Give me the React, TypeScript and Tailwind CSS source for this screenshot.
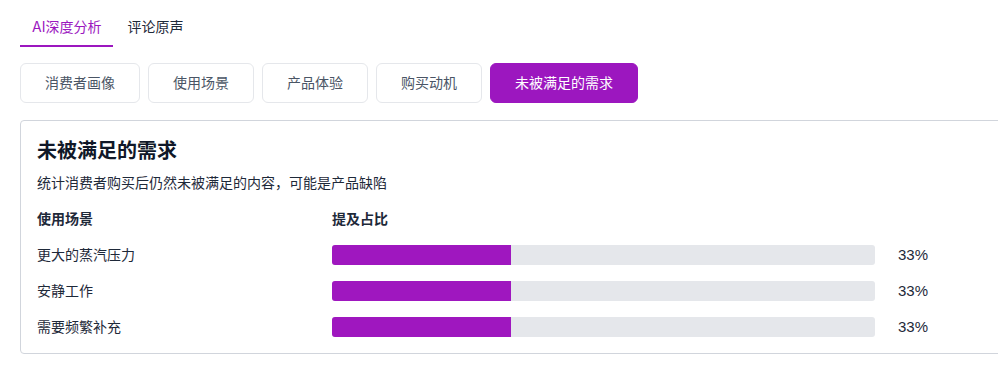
import { useState } from 'react';

const sections = ['消费者画像', '使用场景', '产品体验', '购买动机', '未被满足的需求'];

const needs = [
  { name: '更大的蒸汽压力', pct: 33 },
  { name: '安静工作', pct: 33 },
  { name: '需要频繁补充', pct: 33 },
];

export default function App() {
  const [tab, setTab] = useState(0);
  const [section, setSection] = useState(4);

  return (
    <div
      className="w-[998px] h-[366px] overflow-hidden bg-white px-5 pt-3"
      style={{ fontFamily: 'Inter, "Noto Sans CJK SC", sans-serif' }}
    >
      {/* top tabs */}
      <div className="flex gap-0.5">
        {['AI深度分析', '评论原声'].map((t, i) => (
          <button
            key={t}
            onClick={() => setTab(i)}
            className={
              'px-3 pt-[5px] pb-[8px] text-sm leading-5 border-b-2 ' +
              (tab === i ? 'text-[#9c17bf] border-[#9c17bf]' : 'text-gray-800 border-transparent')
            }
          >
            {t}
          </button>
        ))}
      </div>

      {/* section buttons */}
      <div className="flex gap-2 mt-4">
        {sections.map((s, i) => (
          <button
            key={s}
            onClick={() => setSection(i)}
            className={
              'px-6 py-[9px] text-sm leading-5 rounded-md border ' +
              (section === i
                ? 'bg-[#9c17bf] border-[#9c17bf] text-white'
                : 'bg-white border-gray-200 text-gray-600')
            }
          >
            {s}
          </button>
        ))}
      </div>

      {/* card */}
      <div className="mt-[17px] w-[1000px] border border-gray-300 rounded-[4px] px-4 pt-4 pb-4">
        <h2 className="text-xl leading-7 font-bold text-gray-900">未被满足的需求</h2>
        <p className="mt-2 text-sm leading-5 text-gray-800">统计消费者购买后仍然未被满足的内容，可能是产品缺陷</p>

        <div className="mt-4 flex flex-col gap-4">
          <div className="flex text-sm leading-5 font-bold text-gray-800">
            <div className="w-[295px]">使用场景</div>
            <div>提及占比</div>
          </div>
          {needs.map((n) => (
            <div key={n.name} className="flex items-center text-sm leading-5 text-gray-800">
              <div className="w-[295px]">{n.name}</div>
              <div className="w-[543px] h-5 bg-gray-200 rounded-[3px] overflow-hidden">
                <div className="h-full bg-[#9f17bf]" style={{ width: `${n.pct}%` }} />
              </div>
              <div className="ml-[23px] text-[15px] font-['Liberation_Sans',sans-serif]">{n.pct}%</div>
            </div>
          ))}
        </div>
      </div>
    </div>
  );
}
